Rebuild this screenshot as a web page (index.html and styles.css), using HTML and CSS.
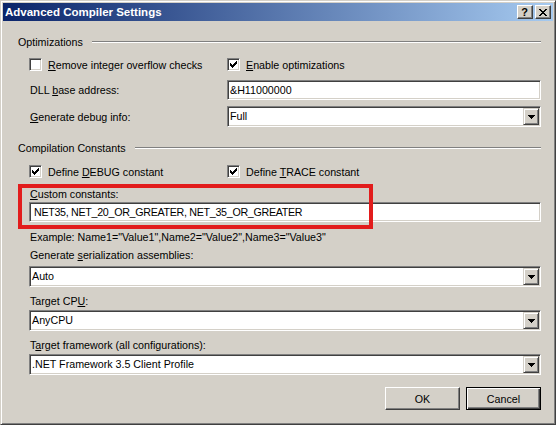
FILE: index.html
```html
<!DOCTYPE html>
<html lang="en">
<head>
<meta charset="utf-8">
<title>Advanced Compiler Settings</title>
<link rel="stylesheet" href="styles.css">
</head>
<body>
<div class="window">
  <div class="titlebar">
    <span class="title">Advanced Compiler Settings</span>
    <div class="cap-buttons">
      <div class="cap-btn help">?</div>
      <div class="cap-btn close">
        <svg width="8" height="7" viewBox="0 0 8 7" shape-rendering="crispEdges"><path fill="#000" d="M0 0h2v1H0zM6 0h2v1H6zM1 1h2v1H1zM5 1h2v1H5zM2 2h4v1H2zM3 3h2v1H3zM2 4h4v1H2zM1 5h2v1H1zM5 5h2v1H5zM0 6h2v1H0zM6 6h2v1H6z"/></svg>
      </div>
    </div>
  </div>
  <div class="body">
    <div class="group-header"><span class="group-title">Optimizations</span><span class="etch"></span></div>
    <div class="two-col check-row indent first-checks">
      <div class="check"><span class="box"></span><span><u>R</u>emove integer overflow checks</span></div>
      <div class="check"><span class="box"><svg width="11" height="11" viewBox="1 1 11 11" shape-rendering="crispEdges"><path fill="#000" d="M3 5h1v3H3zM4 6h1v3H4zM5 7h1v3H5zM6 6h1v3H6zM7 5h1v3H7zM8 4h1v3H8zM9 3h1v3H9z"/></svg></span><span><u>E</u>nable optimizations</span></div>
    </div>
    <div class="two-col field-row indent dll-row">
      <span class="label">DLL <u>b</u>ase address:</span>
      <div class="textbox dll">&amp;H11000000</div>
    </div>
    <div class="two-col field-row indent debug-row">
      <span class="label"><u>G</u>enerate debug info:</span>
      <div class="combo"><span class="combo-text">Full</span><span class="combo-btn"><svg width="7" height="4" viewBox="0 0 7 4" shape-rendering="crispEdges"><path fill="#000" d="M0 0h7v1H0zM1 1h5v1H1zM2 2h3v1H2zM3 3h1v1H3z"/></svg></span></div>
    </div>

    <div class="group-header second-group"><span class="group-title">Compilation Constants</span><span class="etch"></span></div>
    <div class="two-col check-row indent second-checks">
      <div class="check"><span class="box"><svg width="11" height="11" viewBox="1 1 11 11" shape-rendering="crispEdges"><path fill="#000" d="M3 5h1v3H3zM4 6h1v3H4zM5 7h1v3H5zM6 6h1v3H6zM7 5h1v3H7zM8 4h1v3H8zM9 3h1v3H9z"/></svg></span><span>Define <u>D</u>EBUG constant</span></div>
      <div class="check"><span class="box"><svg width="11" height="11" viewBox="1 1 11 11" shape-rendering="crispEdges"><path fill="#000" d="M3 5h1v3H3zM4 6h1v3H4zM5 7h1v3H5zM6 6h1v3H6zM7 5h1v3H7zM8 4h1v3H8zM9 3h1v3H9z"/></svg></span><span>Define <u>T</u>RACE constant</span></div>
    </div>
    <div class="custom-block indent">
      <div class="label"><u>C</u>ustom constants:</div>
      <div class="textbox custom">NET35, NET_20_OR_GREATER, NET_35_OR_GREATER</div>
      <div class="highlight"></div>
    </div>
    <div class="label indent example">Example: Name1="Value1",Name2="Value2",Name3="Value3"</div>
    <div class="label indent ser-label">Generate <u>s</u>erialization assemblies:</div>
    <div class="combo indent wide-combo ser-combo"><span class="combo-text">Auto</span><span class="combo-btn"><svg width="7" height="4" viewBox="0 0 7 4" shape-rendering="crispEdges"><path fill="#000" d="M0 0h7v1H0zM1 1h5v1H1zM2 2h3v1H2zM3 3h1v1H3z"/></svg></span></div>
    <div class="label indent next-label">Target CP<u>U</u>:</div>
    <div class="combo indent wide-combo next-combo"><span class="combo-text">AnyCPU</span><span class="combo-btn"><svg width="7" height="4" viewBox="0 0 7 4" shape-rendering="crispEdges"><path fill="#000" d="M0 0h7v1H0zM1 1h5v1H1zM2 2h3v1H2zM3 3h1v1H3z"/></svg></span></div>
    <div class="label indent next-label">T<u>a</u>rget framework (all configurations):</div>
    <div class="combo indent wide-combo next-combo"><span class="combo-text">.NET Framework 3.5 Client Profile</span><span class="combo-btn"><svg width="7" height="4" viewBox="0 0 7 4" shape-rendering="crispEdges"><path fill="#000" d="M0 0h7v1H0zM1 1h5v1H1zM2 2h3v1H2zM3 3h1v1H3z"/></svg></span></div>

    <div class="buttons">
      <div class="btn">OK</div>
      <div class="btn default">Cancel</div>
    </div>
  </div>
</div>
</body>
</html>
```
FILE: styles.css
```css
html, body {
  margin: 0;
  padding: 0;
}
body {
  background: #d4d0c8;
  font-family: "Liberation Sans", Arial, sans-serif;
  font-size: 10.7px;
  color: #000;
}
u {
  text-underline-offset: 1px;
}
.window {
  width: 556px;
  height: 425px;
  box-sizing: border-box;
  background: #d4d0c8;
  border: 1px solid;
  border-color: #d4d0c8 #404040 #404040 #d4d0c8;
  box-shadow: inset 1px 1px #fff, inset -1px -1px #808080;
  padding: 2px;
  display: flex;
  flex-direction: column;
}
.titlebar {
  height: 18px;
  flex: none;
  background: linear-gradient(to right, #0a246a, #a6caf0);
  display: flex;
  align-items: center;
  padding: 0 2px;
}
.title {
  flex: 1;
  color: #fff;
  font-weight: bold;
  font-size: 11.5px;
  line-height: 18px;
  white-space: nowrap;
}
.cap-buttons {
  display: flex;
  gap: 2px;
}
.cap-btn {
  width: 16px;
  height: 14px;
  box-sizing: border-box;
  border: 1px solid;
  border-color: #fff #404040 #404040 #fff;
  box-shadow: inset -1px -1px #808080;
  background: #d4d0c8;
  display: flex;
  align-items: center;
  justify-content: center;
}
.cap-btn.help {
  font-weight: bold;
  font-size: 11px;
  line-height: 1;
  padding-right: 1px;
}
.cap-btn.close svg {
  display: block;
  margin-right: 1px;
}
.body {
  flex: 1;
  padding: 0 12px 0 15px;
  display: flex;
  flex-direction: column;
}
.group-header {
  display: flex;
  height: 14px;
  line-height: 14px;
  margin-top: 14px;
  white-space: nowrap;
}
.etch {
  flex: 1;
  height: 0;
  border-top: 1px solid #808080;
  border-bottom: 1px solid #fff;
  margin: 6px 0 0 9px;
}
.indent {
  margin-left: 11px;
}
.two-col {
  display: grid;
  grid-template-columns: 198px 1fr;
}
.check-row {
  height: 14px;
}
.first-checks {
  margin-top: 9px;
}
.second-checks {
  margin-top: 10px;
}
.check {
  display: flex;
  align-items: flex-start;
  gap: 6px;
  line-height: 14px;
  white-space: nowrap;
}
.box {
  width: 13px;
  height: 13px;
  flex: none;
  box-sizing: border-box;
  border: 1px solid;
  border-color: #808080 #fff #fff #808080;
  box-shadow: inset 1px 1px #404040, inset -1px -1px #d4d0c8;
  background: #fff;
}
.box svg {
  display: block;
}
.field-row {
  align-items: center;
}
.dll-row {
  margin-top: 8px;
}
.debug-row {
  margin-top: 6px;
}
.label {
  line-height: 14px;
  height: 14px;
  white-space: nowrap;
  padding-left: 1px;
}
.textbox {
  height: 20px;
  box-sizing: border-box;
  border: 1px solid;
  border-color: #808080 #fff #fff #808080;
  box-shadow: inset 1px 1px #404040, inset -1px -1px #d4d0c8;
  background: #fff;
  padding: 0 2px;
  line-height: 18px;
  white-space: nowrap;
  overflow: hidden;
}
.textbox.custom {
  padding-left: 4px;
  margin-top: 1px;
  letter-spacing: -0.3px;
}
.combo {
  height: 21px;
  box-sizing: border-box;
  border: 1px solid;
  border-color: #808080 #fff #fff #808080;
  box-shadow: inset 1px 1px #404040, inset -1px -1px #d4d0c8;
  background: #fff;
  padding: 1px;
  display: flex;
}
.combo-text {
  flex: 1;
  padding-left: 1px;
  line-height: 17px;
  white-space: nowrap;
  overflow: hidden;
}
.combo-btn {
  width: 16px;
  flex: none;
  box-sizing: border-box;
  border: 1px solid;
  border-color: #d4d0c8 #404040 #404040 #d4d0c8;
  box-shadow: inset 1px 1px #fff, inset -1px -1px #808080;
  background: #d4d0c8;
  display: flex;
  align-items: center;
  justify-content: center;
}
.combo-btn svg {
  display: block;
}
.second-group {
  margin-top: 14px;
}
.custom-block {
  position: relative;
  margin-top: 8px;
}
.highlight {
  position: absolute;
  left: -11px;
  top: -3px;
  width: 355px;
  height: 45px;
  box-sizing: border-box;
  border: 4px solid #e21c1c;
  pointer-events: none;
}
.example {
  margin-top: 8px;
}
.ser-label {
  margin-top: 4px;
}
.ser-combo {
  margin-top: 4px;
}
.next-label {
  margin-top: 7px;
}
.next-combo {
  margin-top: 2px;
}
.buttons {
  margin-top: 12px;
  display: flex;
  justify-content: flex-end;
  gap: 6px;
}
.btn {
  width: 75px;
  height: 23px;
  box-sizing: border-box;
  border: 1px solid;
  border-color: #fff #404040 #404040 #fff;
  box-shadow: inset -1px -1px #808080;
  background: #d4d0c8;
  display: flex;
  align-items: center;
  justify-content: center;
  line-height: 14px;
}
.btn.default {
  border-color: #000;
  box-shadow: inset 1px 1px #fff, inset -1px -1px #404040, inset -2px -2px #808080;
}
```
